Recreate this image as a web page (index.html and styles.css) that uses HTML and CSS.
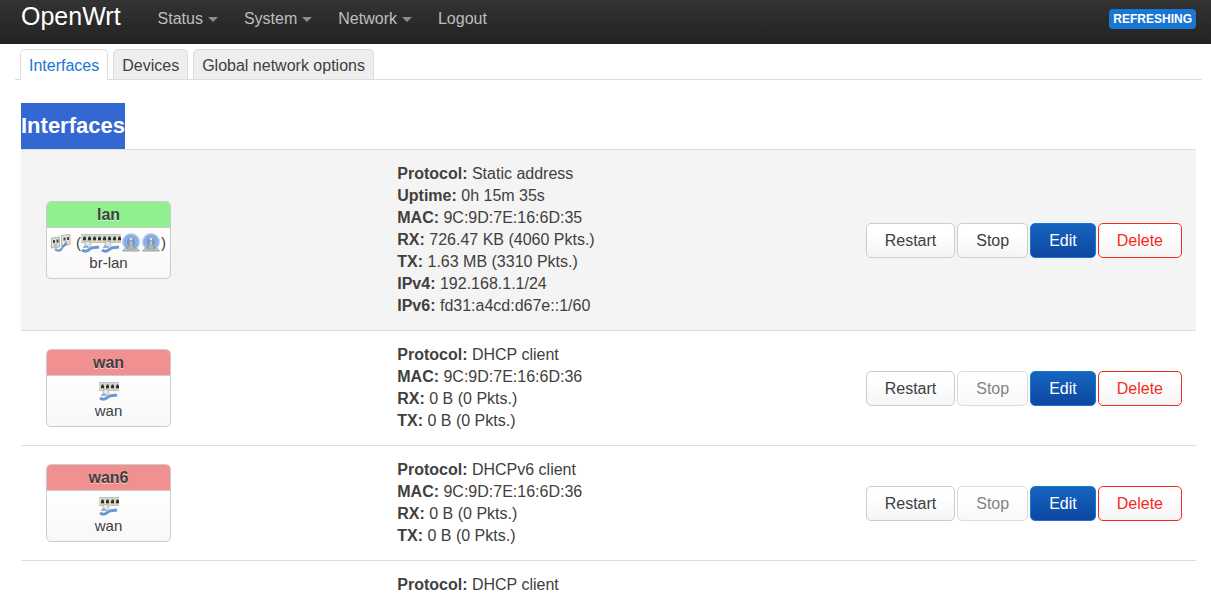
FILE: index.html
```html
<!DOCTYPE html>
<html lang="en">
<head>
    <meta charset="UTF-8">
    <meta name="viewport" content="width=device-width, initial-scale=1.0">
    <title>OpenWrt - Interfaces</title>
    <link rel="stylesheet" href="styles.css">
</head>
<body>
    <!-- shared icons -->
    <svg class="sprite" aria-hidden="true">
        <symbol id="icon-bridge" viewBox="0 0 20 20">
            <path d="M.5 5l8-1v10l-8 1z" fill="#dededa" stroke="#a4a4a0" stroke-width=".8"/>
            <path d="M10.500 2.500l8.500-1v10l-8.500 1z" fill="#e8e8e4" stroke="#a4a4a0" stroke-width=".8"/>
            <path d="M2 7h2v3H2zM5.500 6.500h2v3h-2zM12.500 4.500h2v3h-2zM16 4h2v3h-2z" fill="#45453e"/>
            <path d="M3 11l3-1v4l-3 1zM13.500 8.500l3-1v4l-3 1z" fill="#b9bec2"/>
            <path d="M4 16c4 3 6 1 7-1 1-3 4-2 4-5" fill="none" stroke="#6791c8" stroke-width="2.200"/>
            <path d="M4 15.500c4 2 6 1 7-2" fill="none" stroke="#b0c9ea" stroke-width=".8"/>
        </symbol>
        <symbol id="icon-switch" viewBox="0 0 20 20">
            <path d="M0 1h20v9H0z" fill="#d6d6d0"/>
            <path d="M0 1.500h20M0 9.500h20" stroke="#c2c2bc"/>
            <path d="M2 4.500h.8V3.500h1.600v1H5V7H2zM7 4.500h.8V3.500h1.600v1H10V7H7zM12 4.500h.8V3.500h1.600v1H15V7h-3zM17 4.500h.8V3.500h1.600v1H20V7h-3z" fill="#30302a"/>
            <path d="M2 7.500h3M7 7.500h3M12 7.500h3M17 7.500h3" stroke="#b5a765"/>
            <path d="M4 9l4-1 2 4-3 3-3-2z" fill="#e6e8ea" stroke="#a5a8aa" stroke-width=".8"/>
            <path d="M1 17c3 2 6 1 8-1s5-1 9-2" fill="none" stroke="#6b98d4" stroke-width="3"/>
            <path d="M3 15c0-1 2-2 4-1" fill="none" stroke="#86a9d8" stroke-width="2"/>
        </symbol>
        <symbol id="icon-wifi" viewBox="0 0 20 20">
            <circle cx="10" cy="9" r="9" fill="#b4cdef"/>
            <circle cx="10" cy="9" r="7.500" fill="#86ace0"/>
            <circle cx="10" cy="9" r="5" fill="#6f9bd8" stroke="#9bbce8"/>
            <path d="M1.500 18l3-3h11l3 3z" fill="#c3c8cb" stroke="#8b9296" stroke-width=".8"/>
            <path d="M9.500 7h1l3 9h-7z" fill="#ccd3d8" stroke="#7d868c" stroke-width=".8"/>
            <path d="M8 12h4M7.500 14h5" stroke="#8b9499"/>
            <circle cx="10" cy="6" r="1.600" fill="#f0f4f8" stroke="#8ea4bf" stroke-width=".8"/>
        </symbol>
    </svg>

    <header>
        <a class="brand" href="#">OpenWrt</a>
        <nav class="nav">
            <a class="dropdown" href="#">Status</a>
            <a class="dropdown" href="#">System</a>
            <a class="dropdown" href="#">Network</a>
            <a href="#">Logout</a>
        </nav>
        <button type="button" class="indicator">REFRESHING</button>
    </header>

    <nav class="tabs">
        <a class="active" href="#">Interfaces</a>
        <a href="#">Devices</a>
        <a href="#">Global network options</a>
    </nav>

    <main>
        <h1><span class="selected">Interfaces</span></h1>

        <table class="interfaces">
            <tr class="shaded">
                <td class="name-col">
                    <div class="ifacebox">
                        <div class="ifacebox-head up">lan</div>
                        <div class="ifacebox-body">
                            <div class="icons">
                                <svg><use href="#icon-bridge"/></svg>
                                <span class="members">(<svg><use href="#icon-switch"/></svg><svg><use href="#icon-switch"/></svg><svg><use href="#icon-wifi"/></svg><svg><use href="#icon-wifi"/></svg>)</span>
                            </div>
                            <div>br-lan</div>
                        </div>
                    </div>
                </td>
                <td>
                    <div><strong>Protocol:</strong> Static address</div>
                    <div><strong>Uptime:</strong> 0h 15m 35s</div>
                    <div><strong>MAC:</strong> 9C:9D:7E:16:6D:35</div>
                    <div><strong>RX:</strong> 726.47 KB (4060 Pkts.)</div>
                    <div><strong>TX:</strong> 1.63 MB (3310 Pkts.)</div>
                    <div><strong>IPv4:</strong> 192.168.1.1/24</div>
                    <div><strong>IPv6:</strong> fd31:a4cd:d67e::1/60</div>
                </td>
                <td>
                    <div class="actions">
                        <button type="button" class="btn">Restart</button>
                        <button type="button" class="btn">Stop</button>
                        <button type="button" class="btn btn-edit">Edit</button>
                        <button type="button" class="btn btn-delete">Delete</button>
                    </div>
                </td>
            </tr>
            <tr>
                <td class="name-col">
                    <div class="ifacebox">
                        <div class="ifacebox-head down">wan</div>
                        <div class="ifacebox-body">
                            <div class="icons"><svg><use href="#icon-switch"/></svg></div>
                            <div>wan</div>
                        </div>
                    </div>
                </td>
                <td>
                    <div><strong>Protocol:</strong> DHCP client</div>
                    <div><strong>MAC:</strong> 9C:9D:7E:16:6D:36</div>
                    <div><strong>RX:</strong> 0 B (0 Pkts.)</div>
                    <div><strong>TX:</strong> 0 B (0 Pkts.)</div>
                </td>
                <td>
                    <div class="actions">
                        <button type="button" class="btn">Restart</button>
                        <button type="button" class="btn" disabled>Stop</button>
                        <button type="button" class="btn btn-edit">Edit</button>
                        <button type="button" class="btn btn-delete">Delete</button>
                    </div>
                </td>
            </tr>
            <tr>
                <td class="name-col">
                    <div class="ifacebox">
                        <div class="ifacebox-head down">wan6</div>
                        <div class="ifacebox-body">
                            <div class="icons"><svg><use href="#icon-switch"/></svg></div>
                            <div>wan</div>
                        </div>
                    </div>
                </td>
                <td>
                    <div><strong>Protocol:</strong> DHCPv6 client</div>
                    <div><strong>MAC:</strong> 9C:9D:7E:16:6D:36</div>
                    <div><strong>RX:</strong> 0 B (0 Pkts.)</div>
                    <div><strong>TX:</strong> 0 B (0 Pkts.)</div>
                </td>
                <td>
                    <div class="actions">
                        <button type="button" class="btn">Restart</button>
                        <button type="button" class="btn" disabled>Stop</button>
                        <button type="button" class="btn btn-edit">Edit</button>
                        <button type="button" class="btn btn-delete">Delete</button>
                    </div>
                </td>
            </tr>
            <tr>
                <td class="name-col"></td>
                <td>
                    <div><strong>Protocol:</strong> DHCP client</div>
                </td>
                <td></td>
            </tr>
        </table>
    </main>
</body>
</html>
```

FILE: styles.css
```css
* {
    box-sizing: border-box;
}

body {
    font-family: "Liberation Sans", Arial, sans-serif;
    font-size: 16px;
    line-height: 22px;
    margin: 0;
    color: #404040;
    background-color: #fff;
}

a {
    color: inherit;
    text-decoration: none;
}

.sprite {
    display: none;
}

/* top bar */
header {
    display: flex;
    align-items: flex-start;
    height: 44px;
    padding: 7px 15px 0 21px;
    background: linear-gradient(#333, #222);
}

.brand {
    font-size: 25px;
    line-height: 18px;
    color: #fff;
}

.nav {
    display: flex;
    flex: 1;
    margin-left: 24px;
    color: #bfbfbf;
    line-height: 24px;
}

.nav a {
    padding: 0 13px;
}

.dropdown::after {
    content: "";
    display: inline-block;
    margin-left: 5px;
    border-left: 5px solid transparent;
    border-right: 5px solid transparent;
    border-top: 5px solid #8c8c8c;
    vertical-align: middle;
}

.indicator {
    margin-top: 2px;
    padding: 0 4px;
    border: none;
    border-radius: 4px;
    background-color: #1976d2;
    color: #fff;
    font: bold 12px/20px "Liberation Sans", Arial, sans-serif;
}

/* tabs */
.tabs {
    display: flex;
    gap: 5px;
    margin: 5px 9px 0 15px;
    padding-left: 5px;
    border-bottom: 1px solid #ddd;
}

.tabs a {
    padding: 5px 8px 2px;
    border: 1px solid #ddd;
    border-bottom: none;
    border-radius: 5px 5px 0 0;
    background-color: #eee;
}

.tabs .active {
    margin-bottom: -1px;
    padding-bottom: 3px;
    background-color: #fff;
    color: #1976d2;
}

main {
    padding: 23px 15px 0 21px;
}

h1 {
    margin: 0;
    font-size: 22px;
    line-height: 46px;
}

.selected {
    display: inline-block;
    background-color: #3367d1;
    color: #fff;
}

/* interface list */
.interfaces {
    width: 100%;
    table-layout: fixed;
    border-collapse: separate;
    border-spacing: 0;
}

.interfaces td {
    padding: 13px 14px 13px 12px;
    border-top: 1px solid #ddd;
}

.interfaces .name-col {
    width: 31%;
    padding-left: 25px;
}

.shaded {
    background-color: #f4f4f4;
}

.ifacebox {
    width: 125px;
    overflow: hidden;
    border: 1px solid #ccc;
    border-radius: 5px;
    background: linear-gradient(#fff, #fff 25%, #f8f8f8);
    text-align: center;
}

.ifacebox-head {
    height: 26px;
    border-bottom: 1px solid #ccc;
    font-weight: bold;
    line-height: 25px;
    text-shadow: 0 1px 0 rgba(255, 255, 255, 0.6);
}

.up {
    background-color: #90f090;
}

.down {
    background-color: #f09090;
}

.ifacebox-body {
    padding: 5px 0;
    font-size: 15px;
    line-height: 20px;
}

.icons {
    display: flex;
    justify-content: center;
    gap: 5px;
}

.icons svg {
    width: 20px;
    height: 20px;
}

.members {
    display: flex;
}

.actions {
    display: flex;
    justify-content: flex-end;
    gap: 2px;
}

.btn {
    padding: 5px 18px;
    border: 1px solid #ccc;
    border-radius: 5px;
    background: linear-gradient(#fff, #fff 25%, #f5f5f5);
    color: #404040;
    font: 16px/23px "Liberation Sans", Arial, sans-serif;
    cursor: pointer;
}

.btn:disabled {
    opacity: 0.65;
    cursor: default;
}

.btn-edit {
    border-color: #1976d2;
    background: linear-gradient(#1565c0, #0d47a1);
    color: #fff;
}

.btn-delete {
    border-color: #f32c1d;
    color: #f32c1d;
}
```
